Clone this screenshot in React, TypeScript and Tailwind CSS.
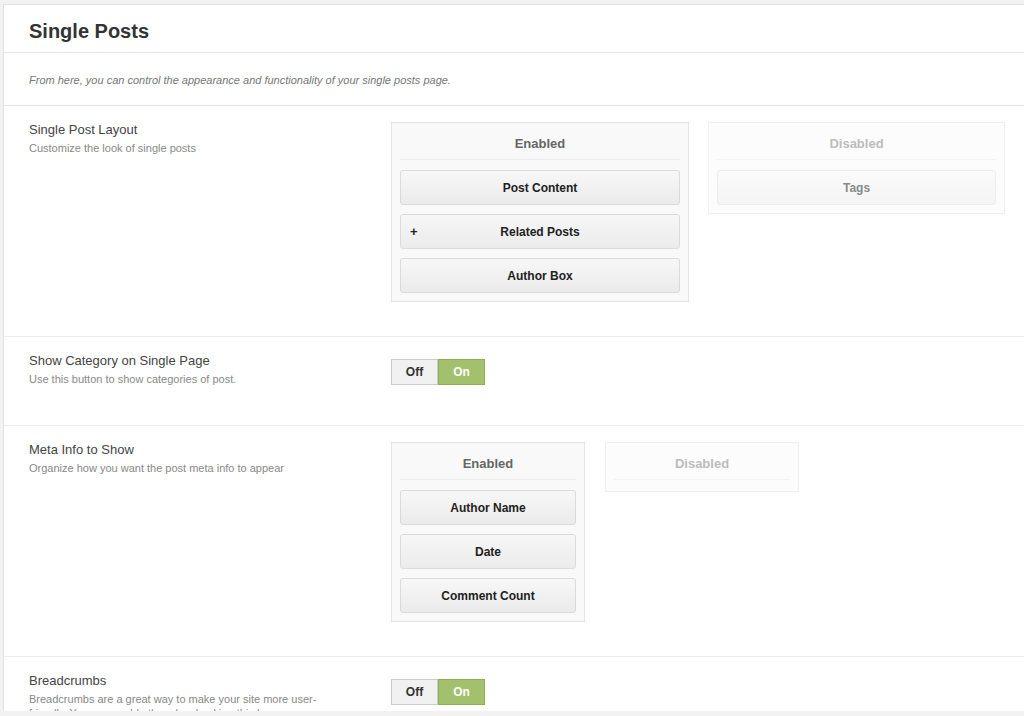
import React from "react";

type BoxProps = {
  title: string;
  items: string[];
  width: string;
  disabled?: boolean;
  plusOn?: string;
};

function SortBox({ title, items, width, disabled, plusOn }: BoxProps) {
  return (
    <div
      className={`${width} border px-[8px] ${
        disabled
          ? "border-[#f0f0f0] bg-[#fcfcfc]"
          : "border-[#e4e4e4] bg-[#f9f9f9]"
      } ${items.length ? "pb-[8px]" : "pb-[11px]"}`}
    >
      <div
        className={`h-[37px] pt-[6px] flex items-center justify-center text-[13px] font-bold border-b ${
          disabled ? "text-[#bdbdbd] border-[#f3f3f3]" : "text-[#666] border-[#ececec]"
        }`}
      >
        {title}
      </div>
      {items.length > 0 && (
        <div className="mt-[10px] flex flex-col gap-[9px]">
          {items.map((item) => (
            <div
              key={item}
              className={`relative h-[35px] flex items-center justify-center rounded-[3px] border text-[12px] font-bold ${
                disabled
                  ? "border-[#ececec] bg-gradient-to-b from-[#fbfbfb] to-[#f4f4f4] text-[#8a8a8a]"
                  : "border-[#dadada] bg-gradient-to-b from-[#f7f7f7] to-[#ebebeb] text-[#222]"
              }`}
            >
              {item === plusOn && (
                <span className="absolute left-[9px] top-[7px] text-[13px] font-bold text-[#222]">
                  +
                </span>
              )}
              {item}
            </div>
          ))}
        </div>
      )}
    </div>
  );
}

function Toggle() {
  return (
    <div className="mt-[6px] flex h-[26px] w-fit text-[12px] font-bold">
      <div className="w-[47px] flex items-center justify-center border border-[#cccccc] bg-[#f1f1f1] text-[#333]">
        Off
      </div>
      <div className="w-[47px] flex items-center justify-center border border-[#8fae5b] bg-[#a3c16d] text-white">
        On
      </div>
    </div>
  );
}

function Row({
  label,
  desc,
  height,
  children,
}: {
  label: string;
  desc: string;
  height: string;
  children: React.ReactNode;
}) {
  return (
    <div className={`${height} flex border-b border-[#ececec] pt-[16px] pl-[25px] shrink-0`}>
      <div className="w-[362px] shrink-0">
        <div className="text-[13px] leading-[16px] text-[#444]">{label}</div>
        <div className="mt-[3px] w-[300px] text-[11px] leading-[14px] text-[#888]">{desc}</div>
      </div>
      <div>{children}</div>
    </div>
  );
}

export default function App() {
  return (
    <div className="h-[716px] overflow-hidden bg-[#f2f2f2] pt-[4px] pl-[3px] font-['Liberation_Sans',Arial,sans-serif]">
      <div className="h-[707px] overflow-hidden flex flex-col bg-white border-l border-t border-[#e2e2e2]">
        <div className="h-[48px] shrink-0 flex items-center border-b border-[#e6e6e6] pl-[25px] pt-[4px]">
          <h1 className="text-[20px] font-bold text-[#333]">Single Posts</h1>
        </div>
        <div className="h-[53px] shrink-0 flex items-center border-b border-[#e6e6e6] pl-[25px] pt-[2px]">
          <p className="text-[11px] italic text-[#777]">
            From here, you can control the appearance and functionality of your single posts page.
          </p>
        </div>

        <Row label="Single Post Layout" desc="Customize the look of single posts" height="h-[231px]">
          <div className="flex items-start gap-[19px]">
            <SortBox
              title="Enabled"
              width="w-[298px]"
              items={["Post Content", "Related Posts", "Author Box"]}
              plusOn="Related Posts"
            />
            <SortBox title="Disabled" width="w-[297px]" items={["Tags"]} disabled />
          </div>
        </Row>

        <Row
          label="Show Category on Single Page"
          desc="Use this button to show categories of post."
          height="h-[89px]"
        >
          <Toggle />
        </Row>

        <Row
          label="Meta Info to Show"
          desc="Organize how you want the post meta info to appear"
          height="h-[231px]"
        >
          <div className="flex items-start gap-[20px]">
            <SortBox
              title="Enabled"
              width="w-[194px]"
              items={["Author Name", "Date", "Comment Count"]}
            />
            <SortBox title="Disabled" width="w-[194px]" items={[]} disabled />
          </div>
        </Row>

        <Row
          label="Breadcrumbs"
          desc="Breadcrumbs are a great way to make your site more user-friendly. You can enable them by checking this box."
          height="h-[120px]"
        >
          <Toggle />
        </Row>
      </div>
    </div>
  );
}
